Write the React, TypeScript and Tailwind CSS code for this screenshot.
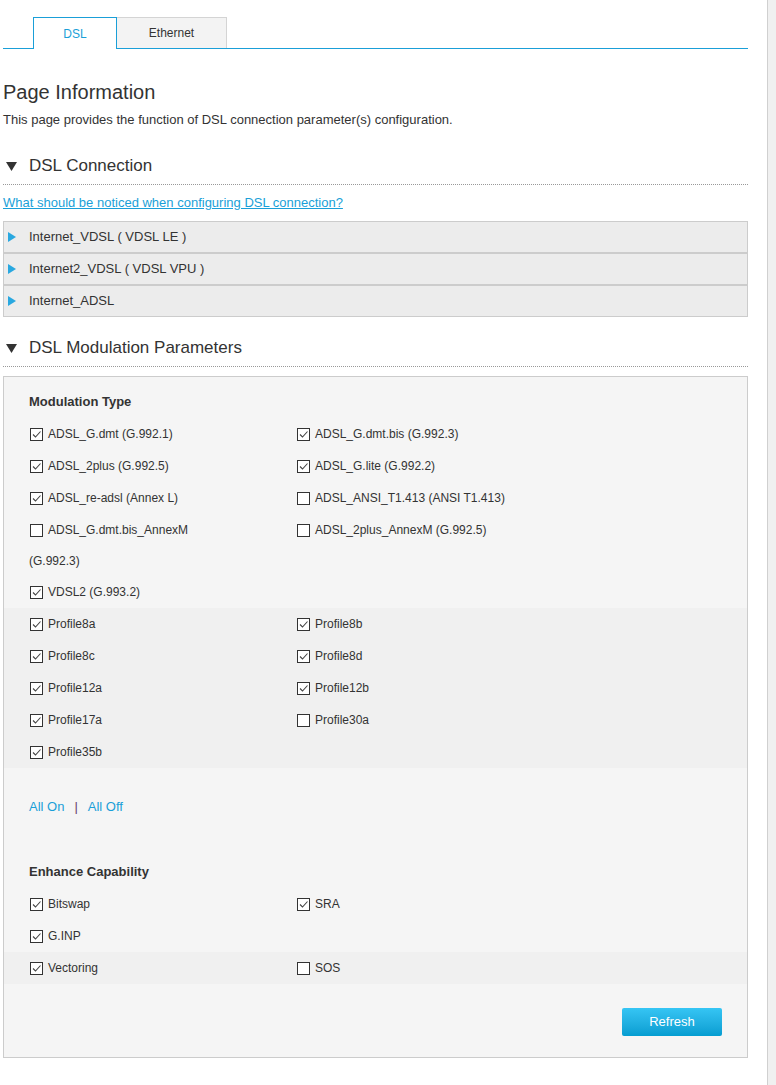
import React from 'react';

const FONT = { fontFamily: '"Liberation Sans", Arial, sans-serif' };

const CheckBox = ({ checked }: { checked: boolean }) => (
  <span className="inline-flex h-[13px] w-[13px] shrink-0 items-center justify-center border border-[#333] bg-white">
    {checked && (
      <svg width="11" height="11" viewBox="0 0 11 11">
        <path d="M2 5.5 L4.5 8 L9.5 2.5" fill="none" stroke="#444" strokeWidth="1.1" />
      </svg>
    )}
  </span>
);

const Check = ({ label, checked }: { label: string; checked: boolean }) => (
  <div className="flex h-[32px] items-center gap-[5px]">
    <CheckBox checked={checked} />
    <span>{label}</span>
  </div>
);

const SectionHeader = ({ title }: { title: string }) => (
  <div className="flex items-center border-b border-dotted border-[#999] pb-[5px] leading-[26px]">
    <svg width="11" height="9" viewBox="0 0 11 9" className="ml-[3px] mr-[12px]">
      <path d="M0 0 H11 L5.5 9 Z" fill="#333" />
    </svg>
    <span className="text-[17px] text-[#333]">{title}</span>
  </div>
);

const connections = ['Internet_VDSL ( VDSL LE )', 'Internet2_VDSL ( VDSL VPU )', 'Internet_ADSL'];

const profiles: [string, boolean][] = [
  ['Profile8a', true], ['Profile8b', true],
  ['Profile8c', true], ['Profile8d', true],
  ['Profile12a', true], ['Profile12b', true],
  ['Profile17a', true], ['Profile30a', false],
  ['Profile35b', true],
];

export default function App() {
  return (
    <div className="flex h-[1085px] w-[776px] overflow-hidden bg-white text-[12px] text-[#333]" style={FONT}>
      <div className="w-[767px] pl-[3px]">
        <div className="w-[745px]">
          {/* tabs */}
          <div className="flex border-b border-[#1a9fd8] pt-[17px]">
            <div className="relative -mb-px ml-[30px] flex h-[32px] w-[84px] items-center justify-center border border-b-0 border-[#1a9fd8] bg-white text-[#1a9fd8]">
              DSL
            </div>
            <div className="flex h-[31px] w-[110px] items-center justify-center border border-b-0 border-l-0 border-[#d4d4d4] bg-[#f3f3f3] text-[#333]">
              Ethernet
            </div>
          </div>

          <h2 className="mt-[30px] text-[20px] leading-[26px] font-light text-[#333]">Page Information</h2>
          <p className="mt-[7px] text-[13px] leading-[16px]">This page provides the function of DSL connection parameter(s) configuration.</p>

          <div className="mt-[25px]">
            <SectionHeader title="DSL Connection" />
          </div>
          <a href="#" className="mt-[10px] block text-[13px] leading-[16px] text-[#1a9fd8] underline">
            What should be noticed when configuring DSL connection?
          </a>
          <div className="mt-[10px]">
            {connections.map((c) => (
              <div key={c} className="flex h-[32px] items-center border border-[#ccc] bg-[#ececec] text-[13px]">
                <svg width="8" height="10" viewBox="0 0 8 10" className="ml-[4px] mr-[13px]">
                  <path d="M0 0 L8 5 L0 10 Z" fill="#29a8e0" />
                </svg>
                <span>{c}</span>
              </div>
            ))}
          </div>

          <div className="mt-[18px]">
            <SectionHeader title="DSL Modulation Parameters" />
          </div>

          <div className="mt-[9px] border border-[#ccc] bg-[#f5f5f5] pt-[17px] pb-[21px]">
            <div className="pl-[25px] text-[13px] leading-[16px] font-bold">Modulation Type</div>
            <div className="mt-[8px] grid grid-cols-[267px_1fr] pl-[26px]">
              <Check label="ADSL_G.dmt (G.992.1)" checked />
              <Check label="ADSL_G.dmt.bis (G.992.3)" checked />
              <Check label="ADSL_2plus (G.992.5)" checked />
              <Check label="ADSL_G.lite (G.992.2)" checked />
              <Check label="ADSL_re-adsl (Annex L)" checked />
              <Check label="ADSL_ANSI_T1.413 (ANSI T1.413)" checked={false} />
              <div>
                <Check label="ADSL_G.dmt.bis_AnnexM" checked={false} />
                <div className="-ml-px flex h-[30px] items-center">(G.992.3)</div>
              </div>
              <Check label="ADSL_2plus_AnnexM (G.992.5)" checked={false} />
              <Check label="VDSL2 (G.993.2)" checked />
            </div>
            <div className="grid grid-cols-[267px_1fr] bg-[#f0f0f0] pl-[26px]">
              {profiles.map(([l, c]) => (
                <Check key={l} label={l} checked={c} />
              ))}
            </div>

            <div className="mt-[31px] flex items-center pl-[25px] leading-[16px] text-[13px]">
              <a href="#" className="text-[#1a9fd8]">All On</a>
              <span className="mx-[10px] text-[#6a3d6a]">|</span>
              <a href="#" className="text-[#1a9fd8]">All Off</a>
            </div>

            <div className="mt-[49px] pl-[25px] text-[13px] leading-[16px] font-bold">Enhance Capability</div>
            <div className="mt-[8px] grid grid-cols-[267px_1fr] pl-[26px]">
              <Check label="Bitswap" checked />
              <Check label="SRA" checked />
              <Check label="G.INP" checked />
              <div />
            </div>
            <div className="grid grid-cols-[267px_1fr] bg-[#f0f0f0] pl-[26px]">
              <Check label="Vectoring" checked />
              <Check label="SOS" checked={false} />
            </div>

            <div className="mt-[24px] flex justify-end pr-[25px]">
              <button className="h-[28px] w-[100px] rounded-[2px] bg-gradient-to-b from-[#35c5f4] to-[#049dd1] text-[13px] text-white">
                Refresh
              </button>
            </div>
          </div>
        </div>
      </div>
      <div className="h-full w-[9px] border-l border-[#d0d0d0] bg-[#f0f0f0]" />
    </div>
  );
}
